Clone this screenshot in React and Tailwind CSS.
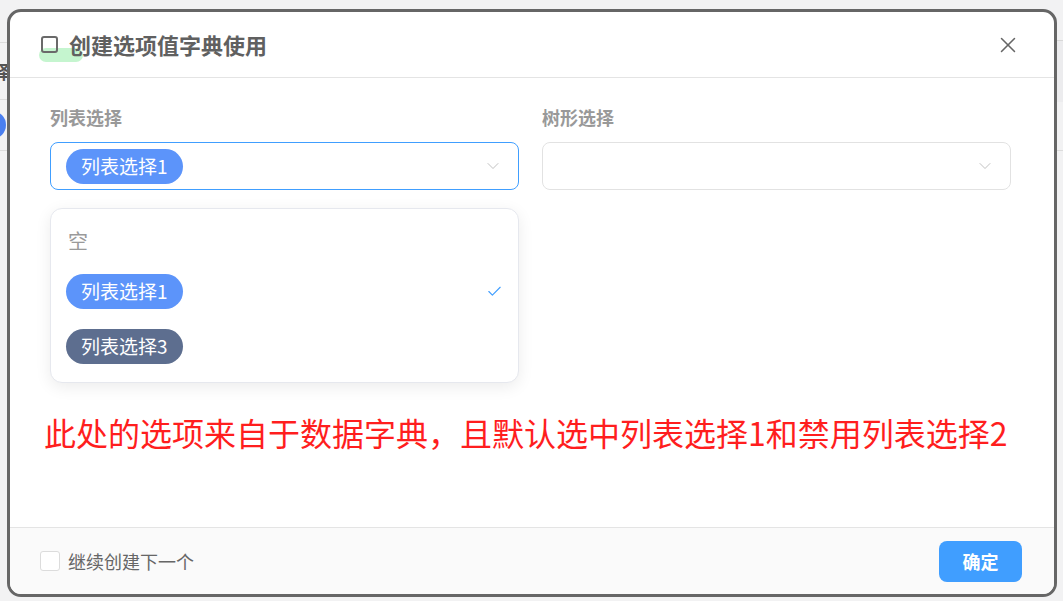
import { X, ChevronDown, Check } from 'lucide-react';

const font = { fontFamily: '"Noto Sans CJK SC", "Noto Sans", sans-serif' };

function Tag({ children, dark }) {
  return (
    <span
      className={`inline-flex h-[35px] items-center rounded-full px-[15px] text-[19px] text-white ${
        dark ? 'bg-[#5d6e8f]' : 'bg-[#5c94fa]'
      }`}
    >
      {children}
    </span>
  );
}

function Backdrop() {
  return (
    <div className="absolute inset-0">
      <div className="mt-[42px] h-px bg-[#dcdcdc]" />
      <div className="ml-[-8px] mt-[14px] text-[18px] font-bold leading-[28px] text-[#555]">择</div>
      <div className="mt-[14px] h-px bg-[#dcdcdc]" />
      <div className="ml-[-22px] mt-[11px] h-[28px] w-[28px] rounded-full bg-[#4a7ff0]" />
      <div className="mt-[11px] h-px bg-[#dcdcdc]" />
    </div>
  );
}

export default function App() {
  return (
    <div className="relative h-[601px] w-[1063px] overflow-hidden bg-[#f2f2f3]" style={font}>
      <Backdrop />
      <div className="absolute right-0 top-[40px] h-[62px] w-[8px] border-t border-[#d8d8d8] bg-[#ececee]" />

      {/* modal */}
      <div className="absolute inset-0 pl-[7px] pr-[6px] pt-[9px] pb-[4px]">
        <div className="flex h-full flex-col overflow-hidden rounded-[14px] border-[3px] border-[#666] bg-white">
          <div className="relative flex h-[66px] shrink-0 items-center border-b border-[#e4e4e4] pl-[31px] pr-[33px]">
            <span className="absolute left-[29px] top-[36px] h-[14px] w-[44px] rounded-full bg-[#c5f5cf]" />
            <span className="relative mr-[11px] h-[17px] w-[17px] rounded-[3px] border-[2.5px] border-[#6a6a6a]" />
            <h2 className="relative text-[22px] font-bold text-[#606060]">创建选项值字典使用</h2>
            <button type="button" className="ml-auto text-[#666]">
              <X size={26} strokeWidth={1.4} />
            </button>
          </div>

          <div className="flex-1 pt-[25px]">
            <div className="grid grid-cols-2 gap-x-[23px] pl-[40px] pr-[43px]">
              <div className="relative">
                <div className="mb-[11px] text-[18px] font-bold leading-[28px] text-[#999]">列表选择</div>
                <div className="flex h-[48px] items-center rounded-[8px] border border-[#409eff] pl-[15px] pr-[15px]">
                  <Tag>列表选择1</Tag>
                  <ChevronDown size={20} strokeWidth={1} className="ml-auto text-[#b5b5b5]" />
                </div>
                <div className="absolute left-0 right-0 top-[105px] z-10 rounded-[12px] border border-[#e6e8ee] bg-white pb-[8px] pl-[15px] pr-[15px] pt-[17px] shadow-[0_4px_16px_rgba(0,0,0,0.08)]">
                  <div className="mb-[8px] pl-[2px] text-[20px] leading-[30px] text-[#9a9a9a]">空</div>
                  <div className="flex h-[55px] items-center">
                    <Tag>列表选择1</Tag>
                    <Check size={17} strokeWidth={1.6} className="ml-auto text-[#409eff]" />
                  </div>
                  <div className="flex h-[55px] items-center">
                    <Tag dark>列表选择3</Tag>
                  </div>
                </div>
              </div>
              <div>
                <div className="mb-[11px] text-[18px] font-bold leading-[28px] text-[#999]">树形选择</div>
                <div className="flex h-[48px] items-center rounded-[8px] border border-[#e2e2e2] pl-[15px] pr-[15px]">
                  <ChevronDown size={20} strokeWidth={1} className="ml-auto text-[#b5b5b5]" />
                </div>
              </div>
            </div>
            <p className="mt-[218px] pl-[34px] text-[32px] leading-[48px] text-[#ff1e1e]">
              此处的选项来自于数据字典，且默认选中列表选择1和禁用列表选择2
            </p>
          </div>

          <div className="flex h-[67px] shrink-0 items-center border-t border-[#e4e4e4] bg-[#fafafa] pl-[30px] pr-[32px]">
            <span className="mr-[8px] h-[20px] w-[20px] rounded-[3px] border border-[#dcdcdc] bg-white" />
            <span className="text-[18px] text-[#666]">继续创建下一个</span>
            <button
              type="button"
              className="ml-auto h-[41px] w-[83px] rounded-[8px] bg-[#409eff] text-[18px] font-bold text-white"
            >
              确定
            </button>
          </div>
        </div>
      </div>
    </div>
  );
}
